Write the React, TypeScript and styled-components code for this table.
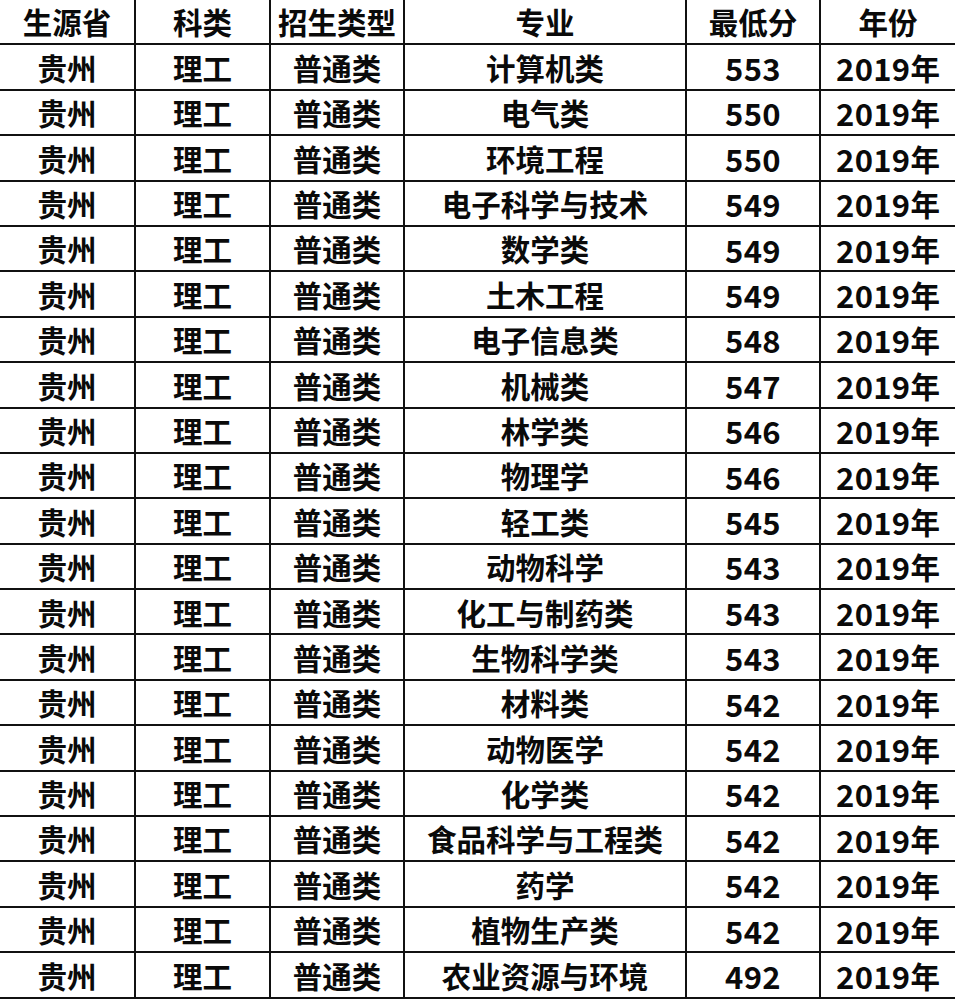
import { Fragment } from "react";
import styled, { createGlobalStyle } from "styled-components";

const GlobalStyle = createGlobalStyle`
  html, body {
    margin: 0;
    padding: 0;
    background: #ffffff;
    overflow: hidden;
  }
`;

const Table = styled.div`
  display: grid;
  grid-template-columns: 136px 135px 134px 282px 134px 134px;
  grid-auto-rows: 45.4px;
  width: 955px;
  font-family: "Noto Sans CJK SC", "Open Sans", sans-serif;
  color: #0a0a0a;
`;

const Cell = styled.div<{ $last?: boolean }>`
  box-sizing: border-box;
  display: flex;
  align-items: center;
  justify-content: center;
  border-bottom: 2px solid #111;
  border-right: ${({ $last }) => ($last ? "none" : "2px solid #111")};
  font-size: 29.5px;
  font-weight: 700;
  line-height: 1;
  white-space: nowrap;
  padding-top: 1px;
`;

const Num = styled.span`
  font-size: 31px;
  letter-spacing: 0.3px;
`;

const headers = ["生源省", "科类", "招生类型", "专业", "最低分", "年份"];

const rows: [string, number][] = [
  ["计算机类", 553],
  ["电气类", 550],
  ["环境工程", 550],
  ["电子科学与技术", 549],
  ["数学类", 549],
  ["土木工程", 549],
  ["电子信息类", 548],
  ["机械类", 547],
  ["林学类", 546],
  ["物理学", 546],
  ["轻工类", 545],
  ["动物科学", 543],
  ["化工与制药类", 543],
  ["生物科学类", 543],
  ["材料类", 542],
  ["动物医学", 542],
  ["化学类", 542],
  ["食品科学与工程类", 542],
  ["药学", 542],
  ["植物生产类", 542],
  ["农业资源与环境", 492],
];

const App = () => {
  return (
    <>
      <GlobalStyle />
      <Table>
        {headers.map((h, i) => (
          <Cell key={h} $last={i === headers.length - 1}>
            {h}
          </Cell>
        ))}
        {rows.map(([major, score], idx) => (
          <Fragment key={idx}>
            <Cell>贵州</Cell>
            <Cell>理工</Cell>
            <Cell>普通类</Cell>
            <Cell>{major}</Cell>
            <Cell>
              <Num>{score}</Num>
            </Cell>
            <Cell $last>
              <Num>2019</Num>年
            </Cell>
          </Fragment>
        ))}
      </Table>
    </>
  );
};

export default App;
